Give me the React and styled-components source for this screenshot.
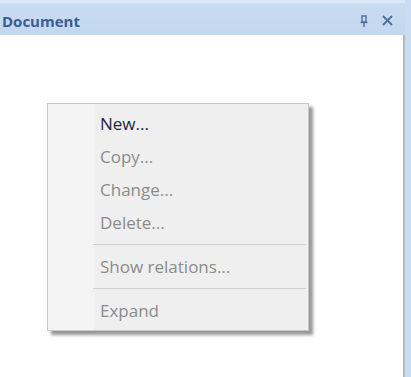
import React from 'react';
import styled, { createGlobalStyle } from 'styled-components';

const Global = createGlobalStyle`
  html, body { margin: 0; padding: 0; background: #ffffff; }
  body { font-family: "Open Sans", "Noto Sans", sans-serif; }
`;

const Panel = styled.div`
  position: relative;
  width: 411px;
  height: 377px;
  display: flex;
  overflow: hidden;
  background: #c8dcf3;
`;

const Main = styled.div`
  flex: 1;
  display: flex;
  flex-direction: column;
`;

const Header = styled.div`
  height: 32px;
  border-top: 3px solid #dce8f6;
  background: linear-gradient(to bottom, #c9dcf1, #c2d7ee);
  display: flex;
  align-items: center;
  padding: 3px 12px 0 2px;
  box-sizing: border-box;
  height: 35px;
`;

const Title = styled.div`
  flex: 1;
  font-weight: 700;
  font-size: 15px;
  color: #3d5d92;
`;

const Tools = styled.div`
  display: flex;
  align-items: center;
  gap: 14px;
`;

const Content = styled.div`
  flex: 1;
  background: #ffffff;
  border-right: 2px solid #b4b8bf;
`;

const Edge = styled.div`
  width: 6px;
  background: #c8dcf3;
`;

const Menu = styled.div`
  position: absolute;
  left: 47px;
  top: 103px;
  width: 260px;
  padding: 3px 0;
  background: linear-gradient(to right, #f4f4f4 0, #f4f4f4 46px, #efefef 46px);
  border: 1px solid #c9c9c9;
  box-shadow: 4px 4px 3px rgba(80, 80, 80, 0.6);
`;

const Item = styled.div`
  height: 33px;
  line-height: 33px;
  padding-left: 52px;
  font-size: 17px;
  color: ${p => (p.$enabled ? '#26263f' : '#8b8b8b')};
`;

const Separator = styled.div`
  height: 11px;
  display: flex;
  align-items: center;
  margin-left: 45px;
  margin-right: 2px;
  &::after {
    content: '';
    flex: 1;
    height: 1px;
    background: #d2d2d2;
  }
`;

const PinIcon = () => (
  <svg width="8" height="12" viewBox="0 0 8 12">
    <path d="M2 1 H6 V7 H2 Z" fill="none" stroke="#4c6e9f" strokeWidth="1.4" />
    <path d="M0.5 7.5 H7.5" stroke="#4c6e9f" strokeWidth="1.4" />
    <path d="M4 8 V12" stroke="#4c6e9f" strokeWidth="1.4" />
  </svg>
);

const CloseIcon = () => (
  <svg width="11" height="11" viewBox="0 0 11 11">
    <path d="M1 1 L10 10 M10 1 L1 10" stroke="#4c6e9f" strokeWidth="1.8" />
  </svg>
);

export default function App() {
  return (
    <Panel>
      <Global />
      <Main>
        <Header>
          <Title>Document</Title>
          <Tools>
            <PinIcon />
            <CloseIcon />
          </Tools>
        </Header>
        <Content />
      </Main>
      <Edge />
      <Menu>
        <Item $enabled>New...</Item>
        <Item>Copy...</Item>
        <Item>Change...</Item>
        <Item>Delete...</Item>
        <Separator />
        <Item>Show relations...</Item>
        <Separator />
        <Item>Expand</Item>
      </Menu>
    </Panel>
  );
}
